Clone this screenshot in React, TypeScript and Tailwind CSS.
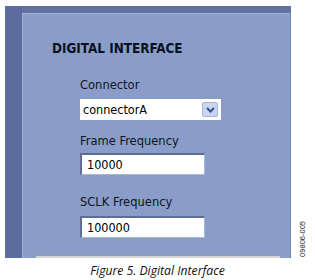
import React from "react";

const uiFont = "font-['DejaVu_Sans_Condensed','DejaVu_Sans',sans-serif]";

const Field: React.FC<{ value: string }> = ({ value }) => (
  <div className="h-[22px] w-[125px] border-t-2 border-l-2 border-b border-r border-t-[#5d6d96] border-l-[#5d6d96] border-b-[#a9b7da] border-r-[#a9b7da] bg-white">
    <div className="pl-[5px] text-[12.5px] leading-[19px] text-black">{value}</div>
  </div>
);

export default function App() {
  return (
    <div className="h-[280px] w-[315px] overflow-hidden bg-white">
      <div className="flex pt-[6px]">
        <div className="ml-[5px] flex h-[252px] w-[286px]">
          <div className="w-[17px] bg-[#5a6d9e]" />
          <div className="flex flex-1 flex-col">
            <div className="h-[7px] bg-[#60739f]" />
            <div className={`flex flex-1 flex-col border-t border-l border-[#9fb0d8] border-r border-r-[#7486b0] bg-[#8a9dc8] ${uiFont}`}>
              <div className="pl-[29px] pt-[28px] text-[13.4px] font-bold leading-[14px] text-[#0c1020]">
                DIGITAL INTERFACE
              </div>
              <div className="pl-[57px]">
                <div className="mt-[22px] text-[12.8px] leading-[14px] text-[#10141f]">Connector</div>
                <div className="mt-[7px] flex h-[21px] w-[141px] items-center justify-between bg-white pl-[3px] pr-[3px]">
                  <span className="text-[12.5px] leading-[14px] text-black">connectorA</span>
                  <span className="flex h-[15px] w-[16px] items-center justify-center rounded-[2px] border border-[#a6b6dc] bg-[#c9d5f2]">
                    <svg width="9" height="6" viewBox="0 0 9 6">
                      <path d="M1 1 L4.5 4.5 L8 1" fill="none" stroke="#35508e" strokeWidth="2" />
                    </svg>
                  </span>
                </div>
                <div className="mt-[14px] text-[12.8px] leading-[14px] text-[#10141f]">Frame Frequency</div>
                <div className="mt-[5px]">
                  <Field value="10000" />
                </div>
                <div className="mt-[20px] text-[12.8px] leading-[14px] text-[#10141f]">SCLK Frequency</div>
                <div className="mt-[7px]">
                  <Field value="100000" />
                </div>
              </div>
              <div className="mt-auto ml-[13px] h-[3px] w-[244px] border-t border-[#9a9a9a] bg-[#d4d4d4]" />
            </div>
          </div>
        </div>
        <div className="ml-[8px] flex h-[252px] flex-col justify-end">
          <div className="rotate-180 pt-[1px] text-[7.5px] leading-[8px] text-[#222] font-['Liberation_Sans',sans-serif] [writing-mode:vertical-rl]">
            09806-005
          </div>
        </div>
      </div>
      <div className="mt-[6px] text-center text-[12.2px] italic leading-[14px] text-[#111] font-['Open_Sans','Liberation_Sans',sans-serif]">
        Figure 5. Digital Interface
      </div>
    </div>
  );
}
